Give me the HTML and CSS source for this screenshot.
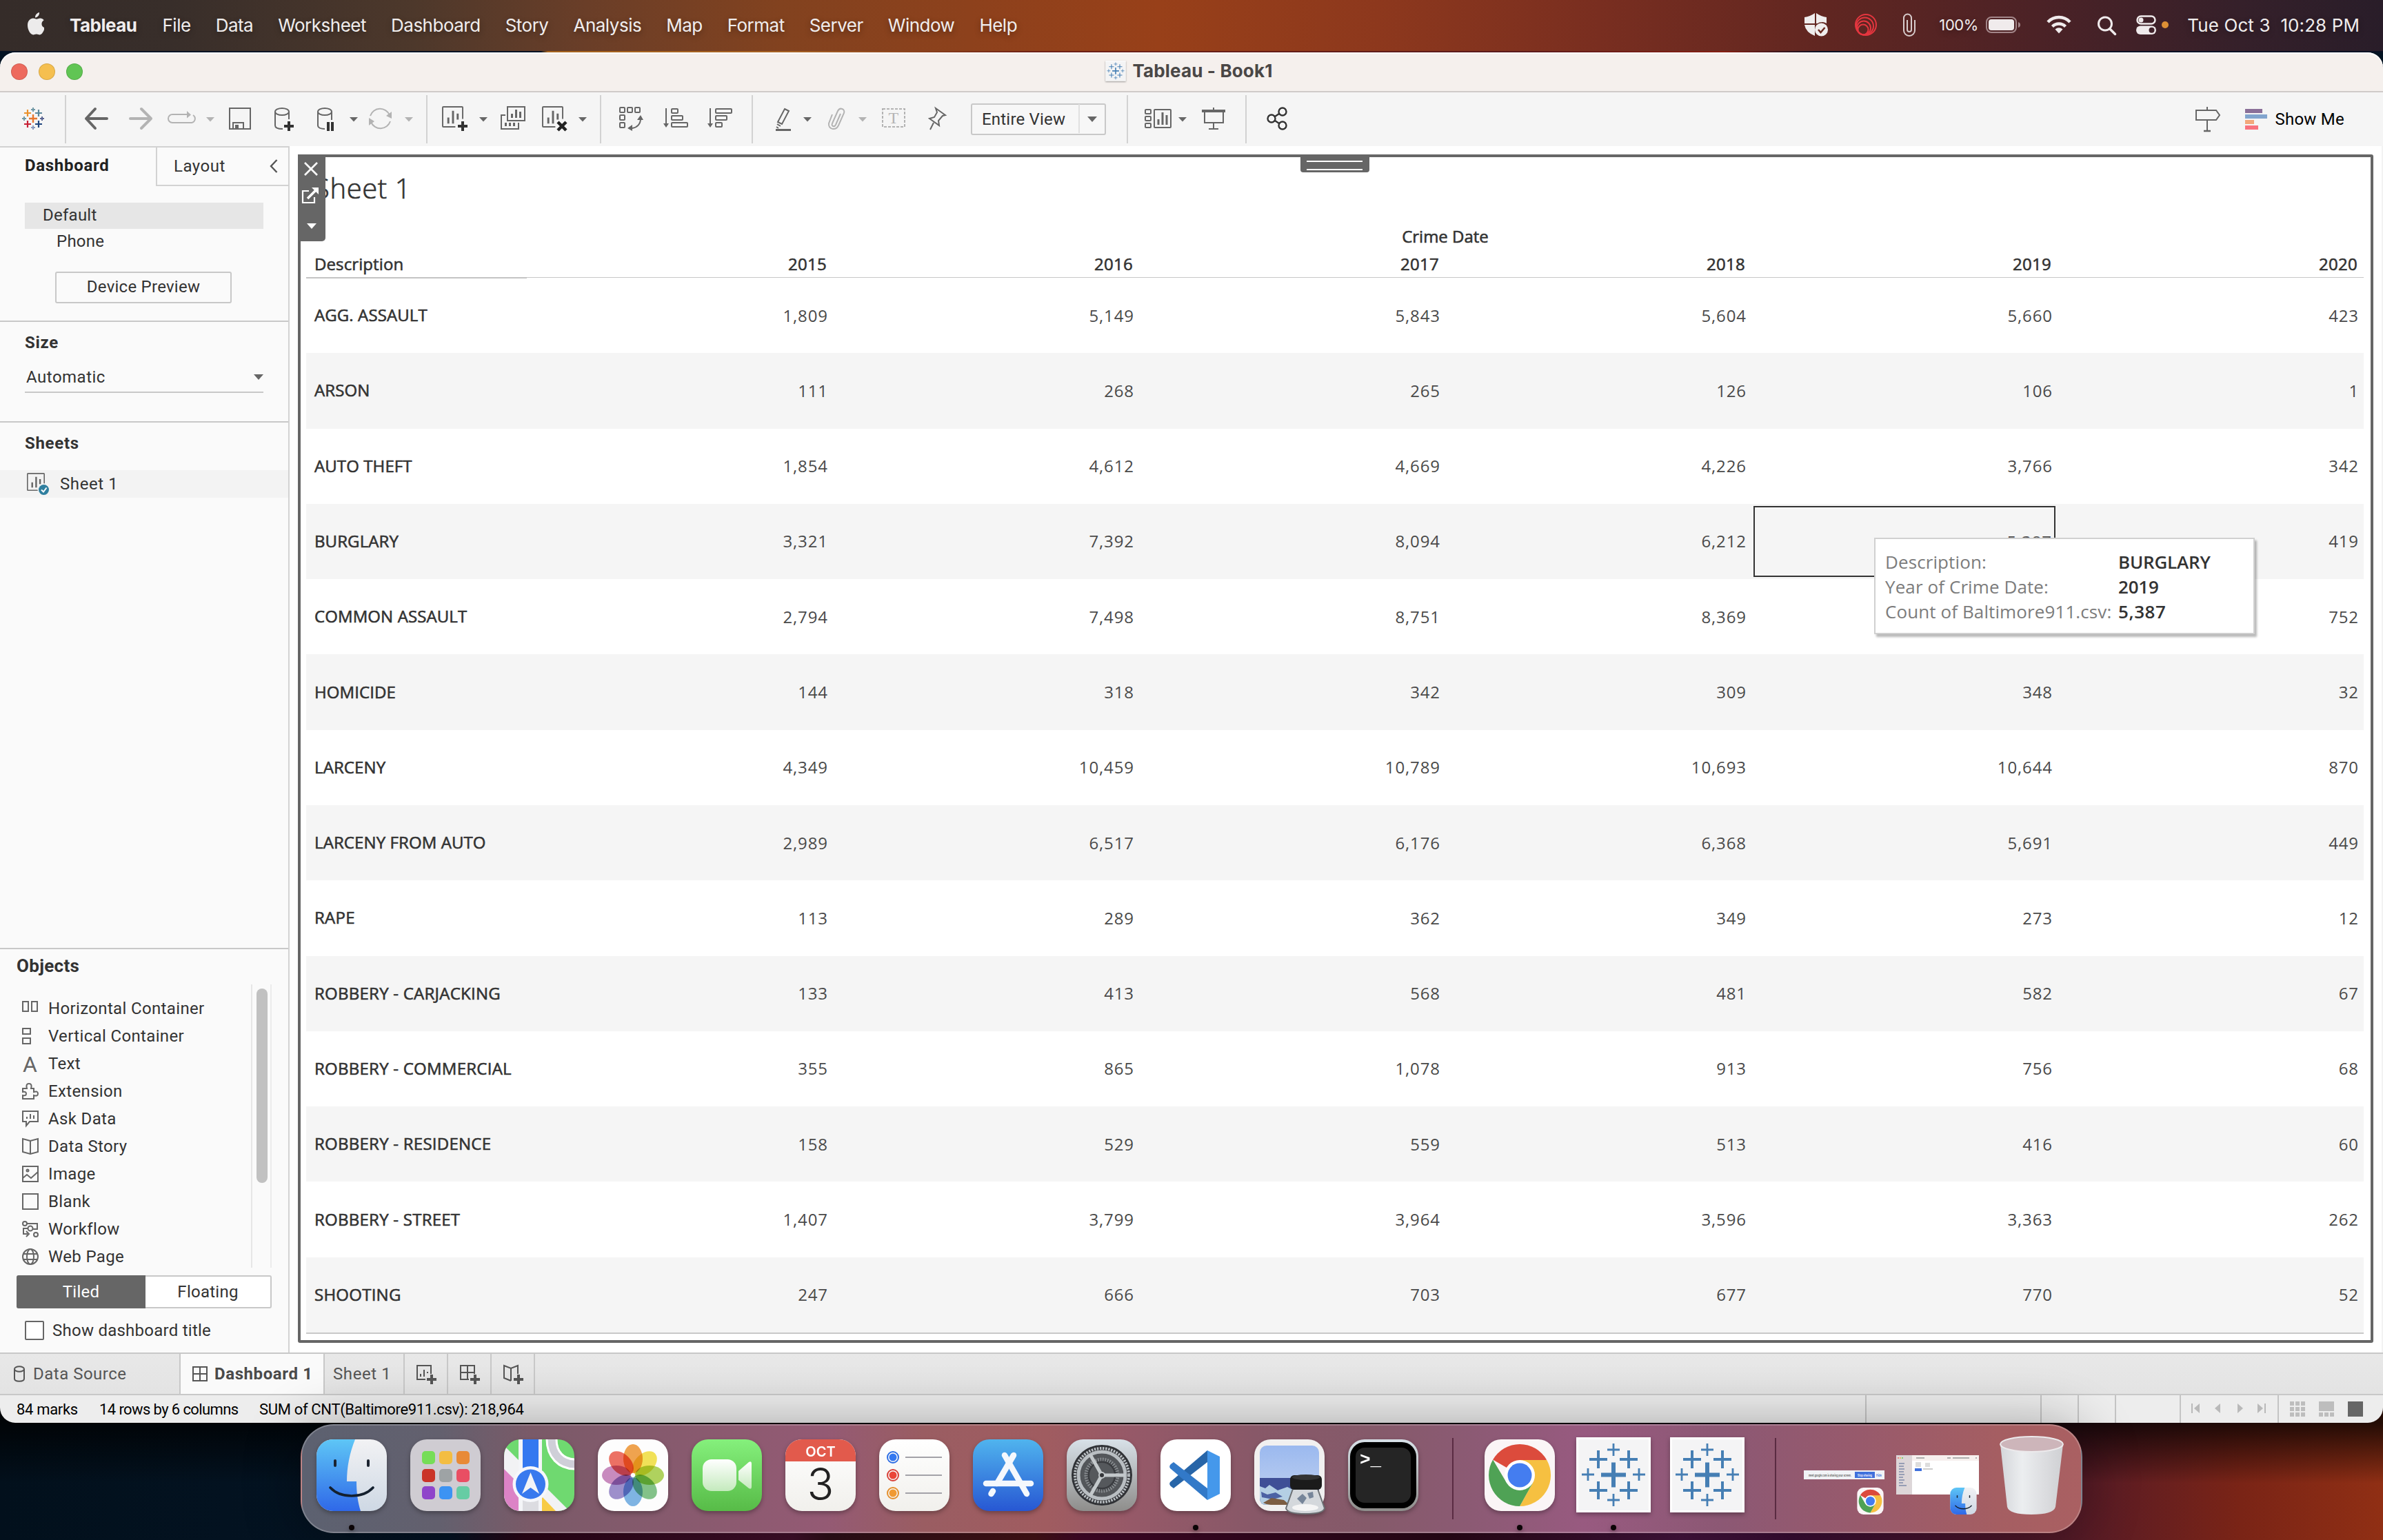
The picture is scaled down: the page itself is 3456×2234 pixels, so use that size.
FILE: index.html
```html
<!DOCTYPE html>
<html lang="en">
<head>
<meta charset="utf-8">
<title>Tableau - Book1</title>
<link rel="stylesheet" href="styles.css">
</head>
<body>
<svg class="defs" width="0" height="0">
  <defs>
    <linearGradient id="blueFace" x1="0" y1="0" x2="0" y2="1"><stop offset="0" stop-color="#5ec6f6"/><stop offset="1" stop-color="#2f68e8"/></linearGradient>
    <linearGradient id="greyFace" x1="0" y1="0" x2="0" y2="1"><stop offset="0" stop-color="#f2f2f4"/><stop offset="1" stop-color="#ced8e4"/></linearGradient>
    <linearGradient id="green" x1="0" y1="0" x2="0" y2="1"><stop offset="0" stop-color="#85f07c"/><stop offset="1" stop-color="#57bb47"/></linearGradient>
    <linearGradient id="storeBlue" x1="0" y1="0" x2="0" y2="1"><stop offset="0" stop-color="#50b4ee"/><stop offset="1" stop-color="#2757d3"/></linearGradient>
    <linearGradient id="steel" x1="0" y1="0" x2="0" y2="1"><stop offset="0" stop-color="#d8e1e8"/><stop offset="1" stop-color="#8e8d8b"/></linearGradient>
    <linearGradient id="paper" x1="0" y1="0" x2="0" y2="1"><stop offset="0" stop-color="#ffffff"/><stop offset="1" stop-color="#f1f0ec"/></linearGradient>
    <linearGradient id="camera" x1="0" y1="0" x2="0" y2="1"><stop offset="0" stop-color="#ffffff"/><stop offset="1" stop-color="#c4eabd"/></linearGradient>
    <linearGradient id="sky" x1="0" y1="0" x2="0" y2="1"><stop offset="0" stop-color="#9bb9ef"/><stop offset="1" stop-color="#c3d3f0"/></linearGradient>
    <linearGradient id="bin" x1="0" y1="0" x2="1" y2="0"><stop offset="0" stop-color="#d4d6da"/><stop offset=".35" stop-color="#eceef0"/><stop offset=".7" stop-color="#dcdde0"/><stop offset="1" stop-color="#cfd0d3"/></linearGradient>
    <clipPath id="tile"><rect x="1" y="0" width="102" height="104" rx="24"/></clipPath>
    <symbol id="finder" viewBox="0 0 104 104">
      <g clip-path="url(#tile)">
        <rect width="104" height="104" fill="url(#greyFace)"/>
        <path d="M0 0H57C49 20 45 40 45 61H59C59 78 61 92 65 104H0Z" fill="url(#blueFace)"/>
      </g>
      <path d="M28 31V38M76 31V38" stroke="#1b2330" stroke-width="4" stroke-linecap="round"/>
      <path d="M21 70C36 86 68 86 83 70" fill="none" stroke="#14202e" stroke-width="3.6" stroke-linecap="round"/>
    </symbol>
    <symbol id="chrome" viewBox="0 0 104 104">
      <rect x="1" y="0" width="102" height="104" rx="24" fill="#faf5f6"/>
      <path d="M52 52L13.100 29.500A45 45 0 0 1 91 29.500Z" fill="#dc4b3c"/>
      <path d="M52 30H91.300A45 45 0 0 1 52 97L71 63Z" fill="#f6c041"/>
      <path d="M33 63L13.100 29.500A45 45 0 0 0 52 97L71 63Z" fill="#4fa255"/>
      <circle cx="52" cy="52" r="22" fill="#fff"/><circle cx="52" cy="52" r="17.500" fill="#447df0"/>
    </symbol>
    <symbol id="tableau" viewBox="-3 -3 110 110">
      <rect x="-2" y="-3" width="108" height="109" fill="#fff"/>
      <rect x="1" y="0" width="102" height="103" fill="#f4f4f5"/>
      <g stroke="#467fb4" fill="none">
        <path d="M52 33.500V69.500M34 51.500H70" stroke-width="6"/>
        <path d="M30 16V42M17 29H43M74 16V42M61 29H87M30 61V87M17 74H43M74 61V87M61 74H87" stroke-width="4"/>
        <path d="M52 6V24M43 15H61M52 79V97M43 88H61M15 42V60M6 51H24M89 42V60M80 51H98" stroke-width="2.800"/>
      </g>
    </symbol>
    <symbol id="bars" viewBox="0 0 32 32">
      <path d="M31 19V2a1 1 0 0 0-1-1H2a1 1 0 0 0-1 1V30a1 1 0 0 0 1 1H20" fill="none" stroke="#666" stroke-width="2"/>
      <path d="M9.500 17v9M16.500 7v19M23.500 11v9" stroke="#666" stroke-width="3"/>
    </symbol>
  </defs>
</svg>

<header class="menubar">
  <svg class="apple" width="26" height="34" viewBox="0 0 26 34"><path d="M18 0c.3 2.400-.7 4.300-1.900 5.600-1.200 1.300-2.700 2-4.100 1.900-.2-2.200.8-4.100 2-5.300C15.100 1 16.700.2 18 0zM25 25c-1.400 3.800-3.900 7.500-6.500 7.500-1.700 0-2.500-1-4.700-1s-3.100 1-4.600 1C5.500 32.500 1 25.800 1 18.600 1 12.300 5 8.600 9 8.600c2.200 0 3.700 1.200 5 1.200 1.200 0 3-1.400 5.600-1.300 1.900.1 3.800.9 5 2.800-4.400 2.700-4 8.900.4 10.700z" fill="#ecebeb"/></svg>
  <nav class="menus">
    <b>Tableau</b><span>File</span><span>Data</span><span>Worksheet</span><span>Dashboard</span><span>Story</span><span>Analysis</span><span>Map</span><span>Format</span><span>Server</span><span>Window</span><span>Help</span>
  </nav>
  <div class="status-items">
    <svg width="166" height="40" viewBox="2616 17 166 40">
      <path d="M2617 26q8-1 15-6v15h-15zM2634 20q7 5 15 6v9q-3-2-6-2-5 0-7 2h-2zM2617 37h15v16q-13-5-15-16z" fill="#efeded"/>
      <circle cx="2641.500" cy="44" r="9.500" fill="#efeded"/><path d="M2637 44l3.500 4 6-7" fill="none" stroke="#6a2a20" stroke-width="2.500"/>
      <g fill="none" stroke="#e5363f" stroke-width="2"><circle cx="2706" cy="37" r="15"/><circle cx="2704.500" cy="39" r="12.500"/><circle cx="2703" cy="41.500" r="10"/><circle cx="2702" cy="44" r="7.500"/></g>
      <path d="M2777 30v15a8 8 0 0 1-16 0V27a5.500 5.500 0 0 1 11 0v17a3 3 0 0 1-6 0V30" fill="none" stroke="#d8cccc" stroke-width="2"/>
    </svg>
    <span class="pct">100%</span>
    <svg class="sys" width="268" height="40" viewBox="2880 17 268 40">
      <rect x="2881" y="26" width="43" height="22" rx="7" fill="none" stroke="#a38689" stroke-width="2"/><rect x="2884" y="29" width="37" height="16" rx="4" fill="#f0ebec"/><path d="M2927 33v8q3-1 3-4t-3-4z" fill="#a38689"/>
      <g fill="none" stroke="#f0ebec" stroke-width="4.500"><path d="M2970 33a22 22 0 0 1 32 0"/><path d="M2976.500 39.500a13.500 13.500 0 0 1 19 0"/></g><path d="M2980.500 43.500a8 8 0 0 1 11 0l-5.500 6z" fill="#f0ebec"/>
      <circle cx="3053" cy="35.500" r="9.500" fill="none" stroke="#f0ebec" stroke-width="3"/><path d="M3060 43l7.500 7.500" stroke="#f0ebec" stroke-width="3.500" stroke-linecap="round"/>
      <rect x="3099.500" y="24.500" width="26" height="11" rx="5.500" fill="none" stroke="#f0ebec" stroke-width="2.500"/><circle cx="3105" cy="30" r="3.500" fill="#f0ebec"/><rect x="3098" y="38.500" width="29" height="12.500" rx="6.200" fill="#f0ebec"/><circle cx="3120.500" cy="44.700" r="4" fill="#40222a"/>
      <circle cx="3140" cy="37" r="5" fill="#dc8f35"/>
    </svg>
    <span class="clock">Tue Oct 3&nbsp; 10:28 PM</span>
  </div>
</header>

<main class="window">
  <div class="titlebar">
    <div class="lights"><i class="red"></i><i class="amber"></i><i class="lime"></i></div>
    <div class="caption"><svg width="30" height="30"><use href="#tableau"/></svg><span>Tableau - Book1</span></div>
  </div>

  <div class="toolbar">
    <svg width="94" height="78" viewBox="0 134 94 78" fill="none" stroke-width="2">
      <path d="M48 166v12M42 172h12" stroke="#e8762d" stroke-width="2.400"/>
      <path d="M40 159v10M35 164h10" stroke="#eb912c" stroke-width="2.200"/><path d="M56 159v10M51 164h10" stroke="#59879b" stroke-width="2.200"/>
      <path d="M40 175v10M35 180h10" stroke="#c72035" stroke-width="2.200"/><path d="M56 175v10M51 180h10" stroke="#1f457e" stroke-width="2.200"/>
      <path d="M48 156v6M45 159h6M35 169v6M32 172h6" stroke="#7199a6"/><path d="M61 169v6M58 172h6" stroke="#5b6591"/><path d="M48 182v6M45 185h6" stroke="#8a9bc0"/>
    </svg>
    <svg class="group" width="522" height="70" viewBox="96 138 522 70" fill="none" stroke="#666" stroke-width="2">
      <path d="M155 172H125M138 158L125 172L138 186" stroke-width="4" stroke-linecap="round" stroke-linejoin="round"/>
      <path d="M189 172H219M205 158L219 172L205 186" stroke="#b3b3b3" stroke-width="4" stroke-linecap="round" stroke-linejoin="round"/>
      <path d="M272 166H250a6 6 0 0 0 0 12H278a6 6 0 0 0 2-11" stroke="#b3b3b3"/><path d="M271 161l6 5.500-6 5z" fill="#b3b3b3" stroke="none"/>
      <path d="M299 170h12l-6 6.500z" fill="#b3b3b3" stroke="none"/>
      <path d="M333 157h30v30h-30zM338 187v-9h15v9"/><path d="M341 181h5v6h-5z" fill="#666" stroke="none"/>
      <ellipse cx="409" cy="162" rx="10" ry="5"/><path d="M399 162v20c0 3 4 5 11 5M419 162v11"/><path d="M419 176v14M412 183h14" stroke="#333" stroke-width="4"/>
      <ellipse cx="471" cy="162" rx="10" ry="5"/><path d="M461 162v20c0 3 4 5 10 5M481 162v12"/><path d="M476 177v13M482 177v13" stroke="#333" stroke-width="4"/>
      <path d="M507 170h12l-6 6.500z" fill="#666" stroke="none"/>
      <path d="M537 168a15 15 0 0 1 28-1M566 176a15 15 0 0 1-28 1" stroke="#b3b3b3"/><path d="M568 162v10l-8-4zM535 182v-11l8 5z" fill="#b3b3b3" stroke="none"/>
      <path d="M587 170h12l-6 6.500z" fill="#b3b3b3" stroke="none"/>
    </svg>
    <svg class="group" width="250" height="70" viewBox="620 138 250 70" fill="none" stroke="#666" stroke-width="2">
      <use href="#bars" x="641" y="154" width="31" height="31"/><path d="M671 176v14M664 183h14" stroke="#333" stroke-width="4"/>
      <path d="M695 170h12l-6 6.500z" fill="#666" stroke="none"/>
      <path d="M736 155h25v20h-25zM733 167h-6v20h25v-9"/><path d="M742.500 165v6M748.500 159v12M754.500 162v9" stroke-width="3"/><path d="M733.500 178v5M739.500 178v5M745.500 178v5" stroke-width="3"/>
      <use href="#bars" x="786" y="154" width="31" height="31"/><path d="M809 177l12 12M821 177l-12 12" stroke="#222" stroke-width="4.500"/>
      <path d="M839 170h12l-6 6.500z" fill="#666" stroke="none"/>
    </svg>
    <svg class="group" width="218" height="70" viewBox="872 138 218 70" fill="none" stroke="#666" stroke-width="2">
      <rect x="899" y="156" width="7" height="7" rx="1"/><rect x="910" y="156" width="7" height="7" rx="1"/><rect x="921" y="156" width="7" height="7" rx="1"/><rect x="899" y="167" width="7" height="7" rx="1"/><rect x="899" y="178" width="7" height="7" rx="1"/>
      <path d="M929 172c0 8-5 13-12 14"/><path d="M924 174l5-7 4 7zM917 181v9l-7-4z" fill="#666" stroke="none"/>
      <path d="M966 157v24M1030 157v24"/><path d="M962 179h8l-4 6zM1026 179h8l-4 6z" fill="#666" stroke="none"/>
      <rect x="974" y="158" width="9" height="6" rx="1"/><rect x="974" y="168" width="16" height="6" rx="1"/><rect x="974" y="178" width="23" height="6" rx="1"/>
      <rect x="1038" y="158" width="23" height="6" rx="1"/><rect x="1038" y="168" width="16" height="6" rx="1"/><rect x="1038" y="178" width="9" height="6" rx="1"/>
    </svg>
    <svg class="group" width="316" height="70" viewBox="1092 138 316 70" fill="none" stroke="#666" stroke-width="2">
      <path d="M1138 158l6 3-10 19-6-3zM1127 180l5 3M1126 184l3 2"/><path d="M1125 188.500h22" stroke-width="3"/>
      <path d="M1165 170h12l-6 6.500z" fill="#666" stroke="none"/>
      <path d="M1219 165l-7 16c-2 4-7 2-5-2l8-18c3-6 11-3 9 3l-8 18c-4 8-15 6-14-3l5-13" stroke="#b3b3b3"/>
      <path d="M1245 170h12l-6 6.500z" fill="#b3b3b3" stroke="none"/>
      <rect x="1280" y="158" width="32" height="26" stroke="#b3b3b3" stroke-dasharray="4 2"/><text x="1296" y="179" class="glyph-t">T</text>
      <path d="M1357 157l14 10-4 1-6 7 1 7-14-10 7-2 4-7zM1354 178l-5 10"/>
    </svg>
    <div class="fit"><span>Entire View</span><i></i></div>
    <svg class="group last" width="172" height="70" viewBox="1634 138 172 70" fill="none" stroke="#666" stroke-width="2">
      <path d="M1635 138v70" stroke="#d2d2d2"/>
      <rect x="1661" y="159" width="8" height="6" rx="1"/><rect x="1661" y="169" width="8" height="6" rx="1"/><rect x="1661" y="179" width="8" height="6" rx="1"/><rect x="1674" y="159" width="24" height="26" rx="1"/><path d="M1680 173v8M1686 163v18M1692 167v14" stroke-width="3"/>
      <path d="M1709 170h12l-6 6.500z" fill="#666" stroke="none"/>
      <path d="M1743 161h34" stroke-width="4"/><path d="M1747 162v16h27v-16M1760 156v4M1760 178v9M1753 187h14"/>
    </svg>
    <svg class="group" width="80" height="70" viewBox="1808 138 80 70" fill="none" stroke="#333" stroke-width="2.400">
      <circle cx="1844" cy="172" r="5.500"/><circle cx="1860" cy="162" r="5.500"/><circle cx="1860" cy="182" r="5.500"/><path d="M1849 169l6-4M1849 175l6 4"/>
    </svg>
    <div class="showme">
      <svg width="108" height="40" viewBox="3182 152 108 40" fill="none" stroke="#666" stroke-width="2">
        <path d="M3185 159h29l5 7-5 7h-29zM3201 154v5M3201 173v15"/><path d="M3196 189h10" stroke-width="2.500"/>
        <g stroke="none"><path d="M3256 157h25v6h-25z" fill="#8a6f98"/><path d="M3256 165h32v6h-32z" fill="#82a5ce"/><path d="M3256 173h13v6h-13z" fill="#f3a77b"/><path d="M3256 181h19v6h-19z" fill="#f8727f"/></g>
      </svg>
      <span>Show Me</span>
    </div>
  </div>

  <div class="workspace">
    <aside class="side">
      <div class="tabs"><b>Dashboard</b><div class="layout-tab"><span>Layout</span><svg width="14" height="22" viewBox="0 0 14 22"><path d="M11.500 2L3 11l8.500 9" fill="none" stroke="#555" stroke-width="2.400"/></svg></div></div>
      <section class="devices">
        <div class="device on">Default</div>
        <div class="device sub">Phone</div>
        <div class="preview">Device Preview</div>
      </section>
      <section class="size"><h3>Size</h3><div class="select"><span>Automatic</span><i></i></div></section>
      <section class="sheets"><h3>Sheets</h3>
        <div class="sheet"><svg width="34" height="34" viewBox="38 688 34 34"><use href="#bars" x="39" y="689" width="26" height="26"/><circle cx="63.500" cy="713.500" r="9" fill="#f3f3f3"/><circle cx="63.500" cy="713.500" r="7.500" fill="#2f7f9f"/><path d="M60 713.500l3 3 4.500-6" fill="none" stroke="#fff" stroke-width="2"/></svg><span>Sheet 1</span></div>
      </section>
      <section class="objects"><h2>Objects</h2>
        <div class="pane">
          <ul>
            <li><svg viewBox="0 0 28 28"><path d="M3 5h8v14H3zM16 5h8v14h-8z" transform="translate(0 -1)"/></svg>Horizontal Container</li>
            <li><svg viewBox="0 0 28 28"><path d="M3 3h11v8H3zM3 17h11v8H3z"/></svg>Vertical Container</li>
            <li><svg viewBox="0 0 28 28"><text x="13.500" y="26" class="glyph-a">A</text></svg>Text</li>
            <li><svg viewBox="0 0 28 28"><path d="M3 25v-5q5 1 5-2.500T3 15v-5h6q-2-7 3-7t3 7h4v5q6-2 6 2.500T19 20v5z"/></svg>Extension</li>
            <li><svg viewBox="0 0 28 28"><path d="M3 3h22v15H13l-5 6v-6H3zM9 14v-3M14 14V7M19 14V9"/></svg>Ask Data</li>
            <li><svg viewBox="0 0 28 28"><path d="M14 6L3 3v19l11 3 11-3V3zM14 6v19"/></svg>Data Story</li>
            <li><svg viewBox="0 0 28 28"><path d="M3 3h22v22H3zM3 20l6-5 6 5 10-9"/><circle cx="10" cy="9" r="1.500"/></svg>Image</li>
            <li><svg viewBox="0 0 28 28"><path d="M3 3h22v22H3z"/></svg>Blank</li>
            <li><svg viewBox="0 0 28 28"><circle cx="6" cy="6" r="3"/><circle cx="14" cy="13" r="3.500"/><circle cx="22" cy="22" r="3"/><path d="M9 6h15v8h-6M10 13H4v8h6M8 17l4 4-4 4"/></svg>Workflow</li>
            <li><svg viewBox="0 0 28 28"><circle cx="14" cy="14" r="11"/><ellipse cx="14" cy="14" rx="5" ry="11"/><path d="M4 10h20M4 18h20"/></svg>Web Page</li>
          </ul>
          <div class="track"><i></i></div>
        </div>
        <div class="toggle"><span class="on">Tiled</span><span>Floating</span></div>
        <label class="check"><i></i>Show dashboard title</label>
      </section>
    </aside>

    <section class="canvas">
      <div class="sheet-frame">
        <div class="grip"></div>
        <div class="frame-tools">
          <svg width="40" height="126" viewBox="432 224 40 126" fill="none" stroke="#fff" stroke-width="2.600"><path d="M442 236l18 18M460 236l-18 18"/><path d="M448 277h-9v17h17v-8" stroke-width="2.200"/><path d="M446 288l13-13" stroke-width="3.500"/><path d="M452 272h10v10z" fill="#fff" stroke="none"/><path d="M445 324h14l-7 8z" fill="#fff" stroke="none"/></svg>
        </div>
        <h1>Sheet 1</h1>
        <div class="crosstab">
          <div class="axis">Crime Date</div>
          <div class="head"><span>Description</span><span>2015</span><span>2016</span><span>2017</span><span>2018</span><span>2019</span><span>2020</span></div>
          <div class="rows">
            <div><b>AGG. ASSAULT</b><span>1,809</span><span>5,149</span><span>5,843</span><span>5,604</span><span>5,660</span><span>423</span></div>
            <div><b>ARSON</b><span>111</span><span>268</span><span>265</span><span>126</span><span>106</span><span>1</span></div>
            <div><b>AUTO THEFT</b><span>1,854</span><span>4,612</span><span>4,669</span><span>4,226</span><span>3,766</span><span>342</span></div>
            <div><b>BURGLARY</b><span>3,321</span><span>7,392</span><span>8,094</span><span>6,212</span><span class="picked">5,387</span><span>419</span></div>
            <div><b>COMMON ASSAULT</b><span>2,794</span><span>7,498</span><span>8,751</span><span>8,369</span><span></span><span>752</span></div>
            <div><b>HOMICIDE</b><span>144</span><span>318</span><span>342</span><span>309</span><span>348</span><span>32</span></div>
            <div><b>LARCENY</b><span>4,349</span><span>10,459</span><span>10,789</span><span>10,693</span><span>10,644</span><span>870</span></div>
            <div><b>LARCENY FROM AUTO</b><span>2,989</span><span>6,517</span><span>6,176</span><span>6,368</span><span>5,691</span><span>449</span></div>
            <div><b>RAPE</b><span>113</span><span>289</span><span>362</span><span>349</span><span>273</span><span>12</span></div>
            <div><b>ROBBERY - CARJACKING</b><span>133</span><span>413</span><span>568</span><span>481</span><span>582</span><span>67</span></div>
            <div><b>ROBBERY - COMMERCIAL</b><span>355</span><span>865</span><span>1,078</span><span>913</span><span>756</span><span>68</span></div>
            <div><b>ROBBERY - RESIDENCE</b><span>158</span><span>529</span><span>559</span><span>513</span><span>416</span><span>60</span></div>
            <div><b>ROBBERY - STREET</b><span>1,407</span><span>3,799</span><span>3,964</span><span>3,596</span><span>3,363</span><span>262</span></div>
            <div><b>SHOOTING</b><span>247</span><span>666</span><span>703</span><span>677</span><span>770</span><span>52</span></div>
          </div>
        </div>
        <dl class="tooltip"><dt>Description:</dt><dd>BURGLARY</dd><dt>Year of Crime Date:</dt><dd>2019</dd><dt>Count of Baltimore911.csv:</dt><dd>5,387</dd></dl>
      </div>
    </section>
  </div>

  <div class="booktabs">
    <div class="src"><svg width="18" height="24" viewBox="0 0 18 24"><ellipse cx="9" cy="5" rx="7" ry="3.800"/><path d="M2 5v14c0 5 14 5 14 0V5"/></svg><span>Data Source</span></div>
    <div class="dash"><svg width="24" height="24" viewBox="0 0 24 24"><path d="M2 2h20v20H2zM12 2v20M2 12h20"/></svg><b>Dashboard 1</b></div>
    <div class="one"><span>Sheet 1</span></div>
    <div class="add"><svg width="32" height="30" viewBox="0 0 32 30"><path d="M22 14V2H2v20h12M7 18v-4M12 18V8M17 13v-2"/><path d="M23 15v14M16 22h14" stroke-width="4"/></svg></div>
    <div class="add"><svg width="32" height="30" viewBox="0 0 32 30"><path d="M22 14V2H2v20h12M12 2v20M2 12h20"/><path d="M23 15v14M16 22h14" stroke-width="4"/></svg></div>
    <div class="add"><svg width="32" height="30" viewBox="0 0 32 30"><path d="M12 24L2 20V2l10 4 10-4v12M12 6v18"/><path d="M23 15v14M16 22h14" stroke-width="4"/></svg></div>
  </div>

  <footer class="statusbar">
    <span class="marks">84 marks</span><span class="dims">14 rows by 6 columns</span><span>SUM of CNT(Baltimore911.csv): 218,964</span>
    <svg width="751" height="40" viewBox="2705 2024 751 40">
      <path d="M2706 2024v40M2960 2024v40M3014 2024v40M3068 2024v40M3162 2024v40M3304 2024v40" stroke="#c4c4c4" stroke-width="2"/>
      <path d="M3178 2036h2v14h-2zM3190 2036v14l-8-7zM3220 2036v14l-8-7zM3245 2036v14l8-7zM3274 2036v14l8-7zM3284 2036h2v14h-2z" fill="#b9b9b9"/>
      <path d="M3321 2033h6v6h-6zM3329 2033h6v6h-6zM3337 2033h6v6h-6zM3321 2041h6v6h-6zM3329 2041h6v6h-6zM3337 2041h6v6h-6zM3321 2049h6v6h-6zM3329 2049h6v6h-6zM3337 2049h6v6h-6zM3363 2033h22v14h-22zM3363 2049h6v6h-6zM3371 2049h6v6h-6zM3379 2049h6v6h-6z" fill="#bdbdbd"/>
      <path d="M3405 2033h22v22h-22z" fill="#666"/>
    </svg>
  </footer>
</main>

<div class="desk">
  <div class="dock">
    <div class="app run"><svg viewBox="0 0 104 104"><use href="#finder"/></svg></div>
    <div class="app"><svg viewBox="0 0 104 104"><rect x="1" width="102" height="104" rx="24" fill="#cfccd2"/><g><rect x="18" y="17" width="19" height="19" rx="5" fill="#76dd58"/><rect x="43" y="17" width="19" height="19" rx="5" fill="#f3bd42"/><rect x="68" y="17" width="19" height="19" rx="5" fill="#e88a37"/><rect x="18" y="43" width="19" height="19" rx="5" fill="#ca3428"/><rect x="43" y="43" width="19" height="19" rx="5" fill="#9ea3a5"/><rect x="68" y="43" width="19" height="19" rx="5" fill="#e94e63"/><rect x="18" y="68" width="19" height="19" rx="5" fill="#8f45ca"/><rect x="43" y="68" width="19" height="19" rx="5" fill="#3c93f3"/><rect x="68" y="68" width="19" height="19" rx="5" fill="#66cca4"/></g></svg></div>
    <div class="app"><svg viewBox="0 0 104 104"><g clip-path="url(#tile)"><rect width="104" height="104" fill="#6fd970"/><path d="M0 8L104 112H0Z" fill="#f2f2f4"/><path d="M0 42L24 66V104H0Z" fill="#dc83c6"/><path d="M55 104V82L76 104Z" fill="#f7cb45"/><path d="M22 0H56V104H22Z" fill="#f4f5f8"/><path d="M28 0H51V64H28Z" fill="#3478f0"/><path d="M28 80H51V104H28Z" fill="#dcdce1"/><path d="M70 0C70 22 84 36 104 36" fill="none" stroke="#fff" stroke-width="17"/><path d="M70 0C70 22 84 36 104 36" fill="none" stroke="#cfcfd8" stroke-width="11"/></g><circle cx="39.500" cy="65" r="26" fill="#f6f7fb"/><circle cx="39.500" cy="65" r="21.500" fill="#3879ee"/><path d="M39.500 48L52 79 39.500 70 27 79Z" fill="#f3f4f7"/></svg></div>
    <div class="app"><svg viewBox="0 0 104 104"><rect x="1" width="102" height="104" rx="24" fill="#fdfdfd"/><g class="petals"><ellipse cx="52" cy="28" rx="14" ry="21" fill="#f09a3c"/><ellipse cx="52" cy="28" rx="14" ry="21" fill="#f2e047" transform="rotate(45 52 52)"/><ellipse cx="52" cy="28" rx="14" ry="21" fill="#a9d04d" transform="rotate(90 52 52)"/><ellipse cx="52" cy="28" rx="14" ry="21" fill="#76be7d" transform="rotate(135 52 52)"/><ellipse cx="52" cy="28" rx="14" ry="21" fill="#72aee3" transform="rotate(180 52 52)"/><ellipse cx="52" cy="28" rx="14" ry="21" fill="#9384c8" transform="rotate(225 52 52)"/><ellipse cx="52" cy="28" rx="14" ry="21" fill="#c47fb9" transform="rotate(270 52 52)"/><ellipse cx="52" cy="28" rx="14" ry="21" fill="#ec6354" transform="rotate(315 52 52)"/></g></svg></div>
    <div class="app"><svg viewBox="0 0 104 104"><rect x="1" width="102" height="104" rx="24" fill="url(#green)"/><rect x="17" y="29" width="49" height="46" rx="13" fill="url(#camera)"/><path d="M69 46L84 33q4-2 4 2V69q0 4-4 2L69 59z" fill="url(#camera)"/></svg></div>
    <div class="app"><svg viewBox="0 0 104 104"><g clip-path="url(#tile)"><rect width="104" height="104" fill="url(#paper)"/><rect width="104" height="32" fill="#e25a4c"/></g><text x="52" y="25" class="cal-m">OCT</text><text x="52" y="88" class="cal-d">3</text></svg></div>
    <div class="app"><svg viewBox="0 0 104 104"><rect x="1" width="102" height="104" rx="24" fill="url(#paper)"/><path d="M39 26H92M39 52H92M39 78H92" stroke="#a3a2a8" stroke-width="2"/><g fill="none" stroke-width="2"><circle cx="21" cy="26" r="8" stroke="#2f6fe4"/><circle cx="21" cy="52" r="8" stroke="#d8423a"/><circle cx="21" cy="78" r="8" stroke="#e4902e"/></g><circle cx="21" cy="26" r="5.500" fill="#3478f0"/><circle cx="21" cy="52" r="5.500" fill="#ea4639"/><circle cx="21" cy="78" r="5.500" fill="#f09a33"/></svg></div>
    <div class="app"><svg viewBox="0 0 104 104"><rect x="1" width="102" height="104" rx="24" fill="url(#storeBlue)"/><g stroke="#f4f8fd" stroke-width="8.500" stroke-linecap="round"><path d="M60 23L36 64M30 75L27.500 79"/><path d="M47 23L79 79"/><path d="M20 64H85"/></g></svg></div>
    <div class="app"><svg viewBox="0 0 104 104"><rect x="1" width="102" height="104" rx="24" fill="url(#steel)"/><circle cx="52" cy="52" r="44" fill="#303236"/><circle cx="52" cy="52" r="39" fill="none" stroke="#b9bec2" stroke-width="4" stroke-dasharray="2.500 1.600"/><circle cx="52" cy="52" r="34" fill="#53565a" stroke="#b9bec2" stroke-width="5"/><circle cx="52" cy="52" r="23" fill="#3a3c40" stroke="#85898d" stroke-width="5" stroke-dasharray="2 1.500"/><circle cx="52" cy="52" r="18" fill="#55585c"/><path d="M52 52H86M52 52L35 22M52 52L35 82" stroke="#c3c8cb" stroke-width="5"/><circle cx="52" cy="52" r="4" fill="#34363a" stroke="#c3c8cb" stroke-width="2"/></svg></div>
    <div class="app run"><svg viewBox="0 0 104 104"><rect x="1" width="102" height="104" rx="24" fill="#fff"/><path d="M69 16L15 62q-2 3 1 6l4 3 49-38z" fill="#2765a8"/><path d="M69 88L15 42q-2-3 1-6l4-3 49 38z" fill="#3279c8"/><path d="M69 16L87 25V79L69 88z" fill="#4598eb"/></svg></div>
    <div class="app"><svg viewBox="0 0 104 104"><rect x="1" width="102" height="104" rx="24" fill="#f1f0f0"/><rect x="9" y="9" width="86" height="86" rx="10" fill="url(#sky)"/><path d="M9 56H95V85q0 10-10 10H19Q9 95 9 85z" fill="#3f4f96"/><path d="M9 68l8 3 6-5 12 8 14-5 14 7V95H19Q9 95 9 85z" fill="#b4cfe4"/><path d="M11 76l9 4 12-3 10 6-14 4-16-3z" fill="#4c62a4"/><path d="M14 92l12-7 18 3 8 7H25q-6 0-11-3z" fill="#7c5d42"/><path d="M57 72H93L103 100Q101 108 75 108T47 100Z" fill="#d4d8dc" stroke="#6c7074" stroke-width="2"/><ellipse cx="75" cy="99" rx="19" ry="5" fill="#f5f5f5"/><path d="M63 86l8-7 6 6-6 9zM78 78l8-2 1 8-6 2z" fill="#768599"/><rect x="53" y="52" width="46" height="21" rx="6" fill="#1b1b1b"/><ellipse cx="76" cy="55" rx="20" ry="4" fill="#333"/></svg></div>
    <div class="app"><svg viewBox="0 0 104 104"><rect x="1" width="102" height="104" rx="24" fill="url(#steel)"/><rect x="4" y="4" width="96" height="96" rx="21" fill="#000"/><rect x="12" y="12" width="80" height="80" rx="13" fill="#252525"/><text x="18" y="37" class="prompt">&gt;_</text></svg></div>
    <hr class="s1">
    <div class="app run"><svg viewBox="0 0 104 104"><use href="#chrome"/></svg></div>
    <div class="app run"><svg viewBox="0 0 104 104"><use href="#tableau" x="-3" y="-3" width="110" height="110"/></svg></div>
    <div class="app"><svg viewBox="0 0 104 104"><use href="#tableau" x="-3" y="-3" width="110" height="110"/></svg></div>
    <hr class="s2">
    <svg class="minis" width="380" height="120" viewBox="2614 2080 380 120">
      <rect x="2616" y="2133" width="117" height="13" fill="#f1f3f6"/><text x="2623" y="2142" class="tiny" textLength="62" lengthAdjust="spacingAndGlyphs">meet.google.com is sharing your screen.</text><rect x="2690" y="2135" width="29" height="9" fill="#3f70dc"/><text x="2694" y="2142" class="tiny w" textLength="21" lengthAdjust="spacingAndGlyphs">Stop sharing</text><text x="2721" y="2142" class="tiny b" textLength="8" lengthAdjust="spacingAndGlyphs">Hide</text>
      <use href="#chrome" x="2693" y="2158" width="39" height="39"/>
      <rect x="2750" y="2111" width="120" height="57" fill="#fff"/><rect x="2750" y="2111" width="23" height="57" fill="#ddd6d8"/><rect x="2773" y="2111" width="97" height="8" fill="#f7f0ee"/>
      <circle cx="2753" cy="2115" r="1" fill="#e66"/><circle cx="2756" cy="2115" r="1" fill="#eb4"/><circle cx="2759" cy="2115" r="1" fill="#6c5"/>
      <path d="M2754 2123h8M2754 2127h7M2754 2131h8M2754 2135h7M2754 2139h8M2754 2143h6M2754 2147h8M2754 2151h6M2754 2155h11" stroke="#7f8aa8" stroke-width="1.500"/><path d="M2779 2115h12M2824 2115h5M2832 2115h24M2865 2115h2" stroke="#999" stroke-width="1.500"/>
      <path d="M2778 2121h8v7h-8zM2792 2122h7v6h-7z" fill="#ddd"/><path d="M2777 2130h10v4h-10z" fill="#3f70dc"/><path d="M2789 2131h14" stroke="#999"/>
      <use href="#finder" x="2828" y="2158" width="39" height="39"/>
      <path d="M2901 2095L2911 2186Q2914 2197 2946 2197T2981 2186L2992 2095Z" fill="url(#bin)"/><ellipse cx="2946.500" cy="2095" rx="45.500" ry="11" fill="#cdb5ba" stroke="#eceaec" stroke-width="2"/>
    </svg>
  </div>
</div>
</body>
</html>
```

FILE: styles.css
```css
* { box-sizing: border-box; }
html, body { margin: 0; padding: 0; }
body {
  width: 3456px;
  height: 2234px;
  overflow: hidden;
  display: flex;
  flex-direction: column;
  background: #031322;
  font: 24px Roboto, sans-serif;
  letter-spacing: .25px;
  color: #333;
}
.defs { position: absolute; }
svg { display: block; flex: none; overflow: visible; }
i { display: block; }
b, h1, h2, h3 { font-weight: 700; margin: 0; }

/* system menu bar */
.menubar {
  height: 74px;
  padding: 0 34px 2px 39px;
  display: flex;
  align-items: center;
  flex: none;
  background: linear-gradient(90deg, #352c29 0, #382e2a 250px, #4d382b 600px, #6a3e28 850px, #82421f 1130px, #984019 1680px, #8d381d 2000px, #792e20 2320px, #602621 2650px, #4c2226 2950px, #35202a 3250px, #291d29 3456px);
  font-family: Inter, sans-serif;
  font-size: 26px;
  color: #f0eded;
  text-shadow: 0 3px 8px rgba(0, 0, 0, .35);
}
.apple { margin-right: 36px; margin-top: -2px; }
.menus { display: flex; gap: 36px; letter-spacing: -.5px; flex: 1; }
.menus b { font-weight: 700; letter-spacing: -.5px; margin-right: 1px; }
.status-items { display: flex; align-items: center; }
.pct { font-size: 22px; margin-left: 30px; width: 68px; letter-spacing: -.4px; }
.clock { margin-left: 24px; letter-spacing: .1px; }

/* application window */
.window {
  position: relative;
  z-index: 1;
  height: 1990px;
  flex: none;
  border-top: 2px solid #5a2a1a;
  border-image: linear-gradient(90deg, #041224 785px, #a8651e 795px, #a86324 1150px, #6e2015 1500px, #5a1a1c 2200px, #861f12 2500px, #0a1024 2640px) 1;
  display: flex;
  flex-direction: column;
}
.titlebar {
  height: 58px;
  flex: none;
  border-bottom: 2px solid #cfcbc9;
  border-radius: 22px 22px 0 0;
  background: #f5f0ed;
  box-shadow: inset 0 2px 0 #fff;
  display: grid;
  grid-template-columns: 1fr auto 1fr;
  align-items: center;
  padding: 0 16px;
}
.lights { display: flex; gap: 16px; }
.lights i { width: 24px; height: 24px; border-radius: 50%; border: 1px solid rgba(0, 0, 0, .12); }
.red { background: #ed6a5e; } .amber { background: #f5bf4f; } .lime { background: #61c554; }
.caption { display: flex; align-items: center; gap: 9px; font: 700 26px Inter, sans-serif; letter-spacing: .15px; color: #4a4746; padding-bottom: 3px; margin-right: 7px; }
.caption svg { filter: drop-shadow(0 1px 1px rgba(0, 0, 0, .4)); }

.toolbar { height: 78px; flex: none; display: flex; align-items: center; background: #f5f5f5; }
.group { border-left: 2px solid #d2d2d2; box-sizing: content-box; }
.group.last { border-left: 0; margin-left: 30px; }
.toolbar .group + .group:not(.last), .toolbar > svg + .group { margin-left: 0; }
.glyph-t { font: 24px "Liberation Serif", serif; fill: #b3b3b3; stroke: none; text-anchor: middle; }
.glyph-a { font: 400 32px Roboto, sans-serif; fill: #666; stroke: none; text-anchor: middle; }
.fit { width: 196px; height: 46px; border: 2px solid #c8c8c8; border-radius: 3px; display: flex; align-items: center; background: #f7f7f7; color: #333; }
.fit span { flex: 1; padding-left: 14px; letter-spacing: .2px; }
.fit i, .select i { border: 7px solid transparent; border-top: 8px solid #666; border-bottom: 0; }
.fit i { box-sizing: content-box; position: relative; margin: 0 11px; }
.fit i::before { content: ""; position: absolute; left: -20px; top: -26px; width: 2px; height: 42px; background: #e0e0e0; }
.showme { margin-left: auto; display: flex; align-items: center; gap: 9px; padding-right: 56px; color: #000; }

.workspace { flex: 1; display: flex; min-height: 0; }

/* left pane */
.side { width: 420px; flex: none; background: #fafafa; border-top: 2px solid #d2d2d2; border-right: 2px solid #d2d2d2; display: flex; flex-direction: column; }
.tabs { height: 56px; display: flex; }
.tabs b { width: 226px; padding-left: 36px; line-height: 53px; letter-spacing: .7px; color: #222; }
.layout-tab { flex: 1; border-left: 2px solid #d2d2d2; border-bottom: 2px solid #d2d2d2; display: flex; justify-content: space-between; align-items: center; padding: 0 14px 0 24px; letter-spacing: .5px; }
.devices { height: 197px; padding: 24px 36px 0; border-bottom: 2px solid #c8c8c8; }
.device { height: 38px; line-height: 37px; padding-left: 26px; }
.device.on { background: #e6e6e6; }
.device.sub { padding-left: 46px; }
.preview { width: 256px; height: 46px; margin: 24px 0 0 44px; border: 2px solid #c8c8c8; border-radius: 3px; line-height: 41px; text-align: center; }
.side h3 { font-size: 24px; line-height: 30px; letter-spacing: .7px; }
.size { height: 146px; padding: 15px 36px 0; border-bottom: 2px solid #c8c8c8; }
.select { margin-top: 14px; height: 44px; padding-left: 2px; border-bottom: 2px solid #c8c8c8; display: flex; justify-content: space-between; align-items: center; letter-spacing: .5px; }
.sheets { padding-top: 15px; }
.sheets h3 { padding-left: 36px; }
.sheet { margin-top: 24px; height: 40px; background: #f3f3f3; display: flex; align-items: center; gap: 15px; padding-left: 38px; letter-spacing: .6px; }
.objects { margin-top: auto; height: 587px; border-top: 2px solid #c8c8c8; padding-left: 24px; }
.objects h2 { font-size: 26px; line-height: 48px; height: 51px; letter-spacing: .3px; }
.pane { height: 411px; width: 370px; display: flex; }
ul { flex: 1; list-style: none; margin: 0; padding: 15px 0 0 6px; overflow: hidden; }
li { height: 40px; display: flex; align-items: center; gap: 12px; letter-spacing: .35px; }
li svg { width: 28px; height: 28px; fill: none; stroke: #666; stroke-width: 2; }
.track { width: 30px; border-left: 2px solid #e6e6e6; border-right: 2px solid #ececec; padding: 6px 0 0 6px; }
.track i { width: 16px; height: 282px; border-radius: 8px; background: #c1c1c1; }
.toggle { width: 370px; height: 48px; margin-top: 11px; display: grid; grid-template-columns: 185px 1fr; border: 2px solid #c8c8c8; border-radius: 3px; text-align: center; line-height: 44px; background: #fff; }
.toggle .on { background: #666; color: #fff; margin: -2px 0 -2px -2px; line-height: 48px; border-radius: 3px 0 0 3px; }
.check { margin: 18px 0 0 12px; display: flex; align-items: center; gap: 12px; }
.check i { width: 28px; height: 28px; border: 2px solid #666; border-radius: 2px; background: #fff; }

/* sheet canvas */
.canvas { flex: 1; background: #fff; border-right: 2px solid #f3f3f3; padding: 12px 12px 14px; }
.sheet-frame { position: relative; height: 1724px; border: 4px solid #666; border-radius: 3px; font-family: "Open Sans", "Noto Sans", sans-serif; letter-spacing: 0; }
.grip { position: absolute; left: 1450px; top: -2px; width: 100px; height: 24px; background: #666; border-radius: 0 0 4px 4px; }
.grip::before { content: ""; position: absolute; left: 9px; right: 10px; top: 7px; height: 10px; border: solid #fff; border-width: 2px 0; }
.frame-tools { position: absolute; left: -4px; top: -4px; z-index: 2; background: #666; border-radius: 0 0 5px 0; }
.sheet-frame h1 { padding: 20px 0 0 20px; height: 96px; font-size: 40px; line-height: 50px; font-weight: 300; letter-spacing: .6px; -webkit-text-stroke: .7px #333; }
.crosstab { margin: 0 10px 0 8px; color: #4a4a4a; }
.axis { margin-left: 320px; height: 40px; line-height: 37px; text-align: center; }
.axis, .head, .rows b { color: #333; -webkit-text-stroke: .6px #333; font-weight: 400; }
.head, .rows > div { display: grid; grid-template-columns: 320px repeat(6, 444px); align-items: center; }
.head { height: 39px; padding-bottom: 1px; border-bottom: 1px solid #c8c8c8; position: relative; }
.head::after { content: ""; position: absolute; left: 0; bottom: -2px; width: 320px; height: 2px; background: #c4c4c4; }
.head span { text-align: right; padding-right: 9px; letter-spacing: .3px; }
.head span:first-child, .rows b { text-align: left; padding: 0 0 0 12px; letter-spacing: .1px; }
.rows { height: 1532px; display: grid; grid-template-rows: repeat(14, 1fr); border-bottom: 2px solid #c8c8c8; }
.rows .picked, .rows span, .rows b { padding-bottom: 1px; }
.rows b { padding-bottom: 2px; }
.rows > div:nth-child(n+9) b { letter-spacing: .25px; }
.rows > div:nth-child(even) { background: #f5f5f5; }
.rows span { text-align: right; padding: 0 7px 1px 0; letter-spacing: .9px; }
.rows .picked { align-self: stretch; margin: 3px 3px 3px 3px; border: 2px solid #333; line-height: 99px; padding: 0 3px 0 0; }
.tooltip { position: absolute; left: 2282px; top: 552px; width: 552px; height: 140px; margin: 0; padding: 15px 0 0 14px; background: #fff; border: 2px solid #d0d0d0; box-shadow: 3px 4px 3px rgba(0, 0, 0, .28); display: grid; grid-template-columns: 338px auto; grid-auto-rows: 36px; align-content: start; font-size: 26px; line-height: 36px; letter-spacing: .1px; color: #7c7c7c; }
.tooltip dd { margin: 0; color: #333; font-weight: 600; letter-spacing: -.2px; }
.tooltip dd:last-child { letter-spacing: .6px; }

/* workbook tabs and status bar */
.booktabs { height: 62px; flex: none; background: linear-gradient(#e8e8e8, #e3e3e3); border-top: 2px solid #c8c8c8; border-bottom: 2px solid #c8c8c8; display: flex; color: #555; }
.booktabs > div { display: flex; align-items: center; border-right: 2px solid #c8c8c8; }
.booktabs svg { fill: none; stroke: #555; stroke-width: 2; }
.booktabs .src { width: 262px; padding-left: 19px; gap: 11px; letter-spacing: .5px; }
.booktabs .dash { width: 209px; padding-left: 16px; gap: 9px; background: #fafafa; color: #4a4a4a; }
.dash b { letter-spacing: .6px; }
.booktabs .one { width: 116px; padding-left: 12px; letter-spacing: .6px; }
.booktabs .add { width: 63px; justify-content: center; padding: 2px 0 0 2px; }
.statusbar { height: 40px; flex: none; background: #ededed; border-radius: 0 0 22px 22px; display: flex; align-items: center; padding: 1px 0 0 24px; font-size: 22px; letter-spacing: -.33px; color: #000; }
.marks { width: 120px; } .dims { width: 232px; letter-spacing: -.6px; }
.statusbar svg { margin: -1px 0 0 auto; }

/* desktop strip with the dock */
.desk {
  position: relative;
  height: 192px;
  flex: none;
  margin-top: -22px;
  padding: 24px 0 0 436px;
  background: linear-gradient(180deg, rgba(0, 0, 0, .75) 22px, rgba(0, 0, 0, 0) 110px), linear-gradient(90deg, #02101c 0, #041424 650px, #2c0518 760px, #43102c 1150px, #30101a 1200px, #481418 1500px, #45082a 1570px, #2a0818 2100px, #471440 2440px, #3a0d35 2600px, #541a28 3000px, #7a2416 3250px, #902f14 3456px);
}
.dock {
  position: relative;
  z-index: 3;
  width: 2584px;
  height: 158px;
  padding: 20px 0 0 20px;
  border: 2px solid rgba(255, 255, 255, .22);
  border-radius: 48px;
  background: linear-gradient(90deg, #5c6170 0, #63606e 200px, #7a5a68 330px, #8c5a70 620px, #945a74 760px, #9a5d62 900px, #a05c60 1080px, #965968 1200px, #885868 1380px, #855a6a 1550px, #8c5a74 1700px, #985a80 1860px, #8c5874 2060px, #985a6c 2260px, #a55e62 2460px, #aa6062 2584px);
  box-shadow: 0 4px 80px 4px rgba(0, 0, 0, .32);
  display: flex;
  gap: 32px;
}
.app { position: relative; width: 104px; height: 104px; flex: none; filter: drop-shadow(0 3px 3px rgba(0, 0, 0, .3)); }
.run::after { content: ""; position: absolute; left: 48px; top: 124px; width: 8px; height: 8px; border-radius: 50%; background: #0b0406; }
.dock hr { width: 2px; height: 118px; border: 0; background: #5a2b42; flex: none; }
.dock .s1 { margin: -2px 12px 0 16px; }
.dock .s2 { margin: -2px 6px 0 14px; }
.minis { margin-top: -8px; }
.petals ellipse { mix-blend-mode: multiply; opacity: .9; }
.cal-m { font: 600 20px Inter, sans-serif; fill: #fff; text-anchor: middle; letter-spacing: 0; }
.cal-d { font: 300 64px Inter, sans-serif; fill: #222; text-anchor: middle; letter-spacing: 0; }
.prompt { font: 700 26px "Liberation Mono", monospace; fill: #fff; letter-spacing: 0; }
.tiny { font: 600 5px Inter, sans-serif; fill: #555; letter-spacing: 0; }
.tiny.w { fill: #fff; } .tiny.b { fill: #3f70dc; }
```
